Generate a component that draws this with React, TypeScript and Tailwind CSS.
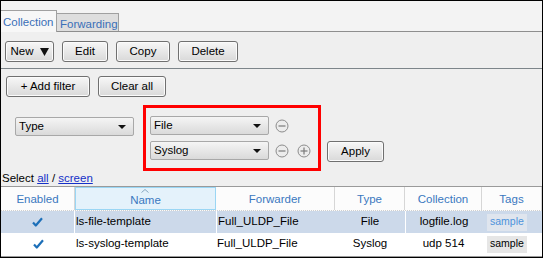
import React from 'react';

const font = "font-['Liberation_Sans',Arial,sans-serif]";

function Btn({ w, children }: { w: string; children: React.ReactNode }) {
  return (
    <div
      className={`${w} h-[21px] flex items-center justify-center border border-[#707070] rounded-[3px] bg-linear-to-b from-[#f7f7f7] to-[#d9d9d9] text-[11.5px] text-black shadow-[inset_0_0_0_1px_#fbfbfb]`}
    >
      {children}
    </div>
  );
}

function Select({ w, label }: { w: string; label: string }) {
  return (
    <div
      className={`${w} h-[19px] relative flex items-center pl-[3px] border border-[#a8a8a8] rounded-[2px] bg-linear-to-b from-[#f5f5f5] to-[#dadada] text-[11.5px] text-black`}
    >
      {label}
      <svg className="absolute right-[7px] top-[7px]" width="8" height="4" viewBox="0 0 8 4">
        <path d="M0 0h8L4 4z" fill="#111" />
      </svg>
    </div>
  );
}

function RoundIcon({ plus }: { plus?: boolean }) {
  return (
    <svg width="14" height="14" viewBox="0 0 14 14">
      <circle cx="7" cy="7" r="6" fill="#ececec" stroke="#8c8c8c" strokeWidth="1" />
      <path d="M3.5 7h7" stroke="#7a7a7a" strokeWidth="1.2" />
      {plus && <path d="M7 3.5v7" stroke="#7a7a7a" strokeWidth="1.2" />}
    </svg>
  );
}

function Check() {
  return (
    <svg width="11" height="10" viewBox="0 0 11 10">
      <path d="M1 5.5l2.8 3L10 1.2" stroke="#1c6fb8" strokeWidth="2.2" fill="none" strokeLinejoin="round" />
    </svg>
  );
}

const cols = 'grid grid-cols-[74px_141px_119px_70px_77px_1fr]';

export default function App() {
  return (
    <div className={`w-[544px] h-[258px] bg-white ${font}`}>
      <div className="w-[543px] h-[258px] border border-black flex flex-col bg-[#efefef] overflow-hidden">
        {/* tabs */}
        <div className="h-[31px] shrink-0 bg-[#f3f3f3] border-b border-[#8e8e8e] flex items-end">
          <div className="w-[56px] h-[22px] -mb-px border-t border-r border-[#a0a0a0] bg-[#f7f7f7] text-[11.5px] text-[#3a6fb8] pl-[2px] pt-[3px] relative z-10">
            Collection
          </div>
          <div className="w-[62px] h-[18px] border-t border-r border-[#a0a0a0] bg-[#dedede] text-[11.5px] text-[#3a6fb8] pl-[3px] pt-[2px]">
            Forwarding
          </div>
        </div>

        {/* toolbar */}
        <div className="h-[37px] shrink-0 border-b border-[#7d858a] flex items-start gap-[8px] pl-[4px] pt-[9px]">
          <Btn w="w-[49px]">
            <span>New</span>
            <svg className="ml-[6px]" width="9" height="8" viewBox="0 0 9 8">
              <path d="M0 0h9L4.5 8z" fill="#111" />
            </svg>
          </Btn>
          <Btn w="w-[46px]">Edit</Btn>
          <Btn w="w-[54px]">Copy</Btn>
          <Btn w="w-[60px]">Delete</Btn>
        </div>

        {/* filter area */}
        <div className="flex-1 flex flex-col">
          <div className="flex gap-[8px] pl-[5px] pt-[7px]">
            <Btn w="w-[84px]">+ Add filter</Btn>
            <Btn w="w-[68px]">Clear all</Btn>
          </div>
          <div className="flex items-start mt-[8px]">
            <div className="ml-[14px] mt-[12px]">
              <Select w="w-[119px]" label="Type" />
            </div>
            <div className="ml-[9px] border-[3px] border-[#ff0000] pl-[4px] pr-[7px] pt-[8px] pb-[8px] flex flex-col gap-[6px]">
              <div className="flex items-center gap-[6px]">
                <Select w="w-[119px]" label="File" />
                <RoundIcon />
              </div>
              <div className="flex items-center gap-[6px]">
                <Select w="w-[119px]" label="Syslog" />
                <RoundIcon />
                <div className="ml-[2px]">
                  <RoundIcon plus />
                </div>
              </div>
            </div>
            <div className="ml-[6px] mt-[36px]">
              <Btn w="w-[57px]">Apply</Btn>
            </div>
          </div>
          <div className="text-[11.5px] leading-[13px] text-black pl-[1px] mt-[1px]">
            Select <span className="text-[#1530c8] underline">all</span> /{' '}
            <span className="text-[#1530c8] underline">screen</span>
          </div>
        </div>

        {/* table */}
        <div className="h-[71px] shrink-0 border-t border-b border-[#9a9a9a] bg-white text-[11.5px]">
          <div className={`${cols} h-[24px] border-b border-dotted border-[#cfcfcf] text-[#3a78bf] bg-[#fcfcfc]`}>
            <div className="flex items-center justify-center border-r border-[#d6d6d6] pt-[2px]">Enabled</div>
            <div className="relative flex items-center justify-center bg-[#e4f2fb] border border-[#9ad6f4] pt-[4px]">
              <svg className="absolute top-[1px] left-[65px]" width="8" height="4" viewBox="0 0 8 4">
                <path d="M0.5 3.5L4 0.5l3.5 3" stroke="#8aa8c0" fill="none" />
              </svg>
              Name
            </div>
            <div className="flex items-center justify-center border-r border-[#d6d6d6] pt-[2px]">Forwarder</div>
            <div className="flex items-center justify-center border-r border-[#d6d6d6] pt-[2px]">Type</div>
            <div className="flex items-center justify-center border-r border-[#d6d6d6] pt-[2px]">Collection</div>
            <div className="flex items-center justify-center border-r border-[#d6d6d6] pt-[2px]">Tags</div>
          </div>
          <div className={`${cols} h-[22px] bg-[#ccd9ea] text-black`}>
            <div className="flex items-center justify-center border-r border-white"><Check /></div>
            <div className="flex items-center pl-[1px]">ls-file-template</div>
            <div className="flex items-center pl-[1px] border-l border-white">Full_ULDP_File</div>
            <div className="flex items-center justify-center">File</div>
            <div className="flex items-center justify-center border-l border-white">logfile.log</div>
            <div className="flex items-center pl-[5px]">
              <span className="h-[17px] px-[3px] flex items-center bg-[#dfe5ee] text-[10.5px] text-[#4d93dc]">sample</span>
            </div>
          </div>
          <div className={`${cols} h-[22px] text-black`}>
            <div className="flex items-center justify-center"><Check /></div>
            <div className="flex items-center pl-[1px]">ls-syslog-template</div>
            <div className="flex items-center pl-[1px]">Full_ULDP_File</div>
            <div className="flex items-center justify-center">Syslog</div>
            <div className="flex items-center justify-center">udp 514</div>
            <div className="flex items-center pl-[5px]">
              <span className="h-[17px] px-[3px] flex items-center bg-[#e6e6e6] text-[10.5px] text-black">sample</span>
            </div>
          </div>
        </div>
      </div>
    </div>
  );
}
